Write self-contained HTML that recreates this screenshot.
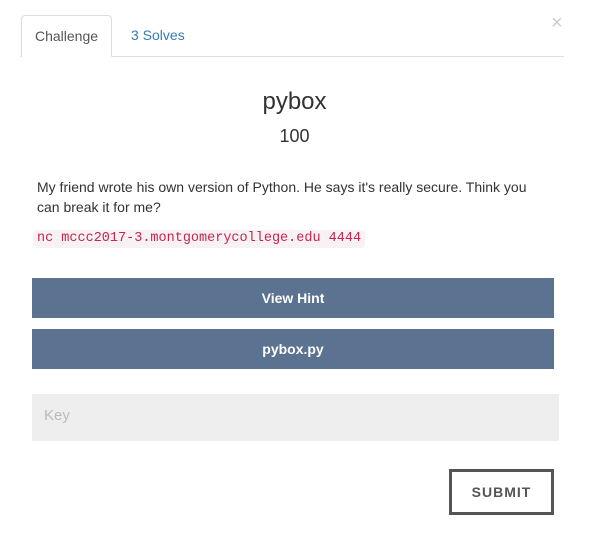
<!DOCTYPE html>
<html><head><style>
body{margin:0;width:589px;height:553px;background:#fff;font-family:"Liberation Sans",sans-serif;color:#333;position:relative;overflow:hidden}
.a{position:absolute}
</style></head><body>
<div class="a" style="left:20px;top:56px;width:544px;height:1px;background:#ddd"></div>
<div class="a" style="left:21px;top:15px;width:91px;height:42px;border:1px solid #ddd;border-bottom:1px solid #fff;border-radius:4px 4px 0 0;background:#fff;box-sizing:border-box;font-size:14px;color:#555;text-align:center;line-height:40px">Challenge</div>
<div class="a" style="left:131px;top:15px;line-height:40px;font-size:14px;color:#337ab7">3 Solves</div>
<div class="a" style="left:551px;top:12px;font-size:20px;color:#ccc">×</div>
<div class="a" style="left:0;width:589px;top:88px;text-align:center;font-size:24px;color:#333">pybox</div>
<div class="a" style="left:0;width:589px;top:126px;text-align:center;font-size:18px;color:#333">100</div>
<div class="a" style="left:37px;top:177px;width:500px;font-size:14px;line-height:20px;color:#333">My friend wrote his own version of Python. He says it's really secure. Think you can break it for me?</div>
<div class="a" style="left:33px;top:230px;padding:1px 4px;background:#f9f2f4;color:#c7254e;border-radius:4px;font-family:'Liberation Mono',monospace;font-size:13.5px;line-height:16px">nc mccc2017-3.montgomerycollege.edu 4444</div>
<div class="a" style="left:32px;top:278px;width:522px;height:40px;background:#5b7290;color:#fff;font-weight:bold;font-size:14px;text-align:center;line-height:40px">View Hint</div>
<div class="a" style="left:32px;top:329px;width:522px;height:40px;background:#5b7290;color:#fff;font-weight:bold;font-size:14px;text-align:center;line-height:40px">pybox.py</div>
<div class="a" style="left:32px;top:394px;width:527px;height:47px;background:#eee;color:#bbb;font-size:15px;line-height:44px;box-sizing:border-box;padding-left:12px">Key</div>
<div class="a" style="left:449px;top:469px;width:105px;height:46px;border:3px solid #555;box-sizing:border-box;color:#555;font-weight:bold;font-size:14px;letter-spacing:1px;text-align:center;line-height:40px">SUBMIT</div>
</body></html>
